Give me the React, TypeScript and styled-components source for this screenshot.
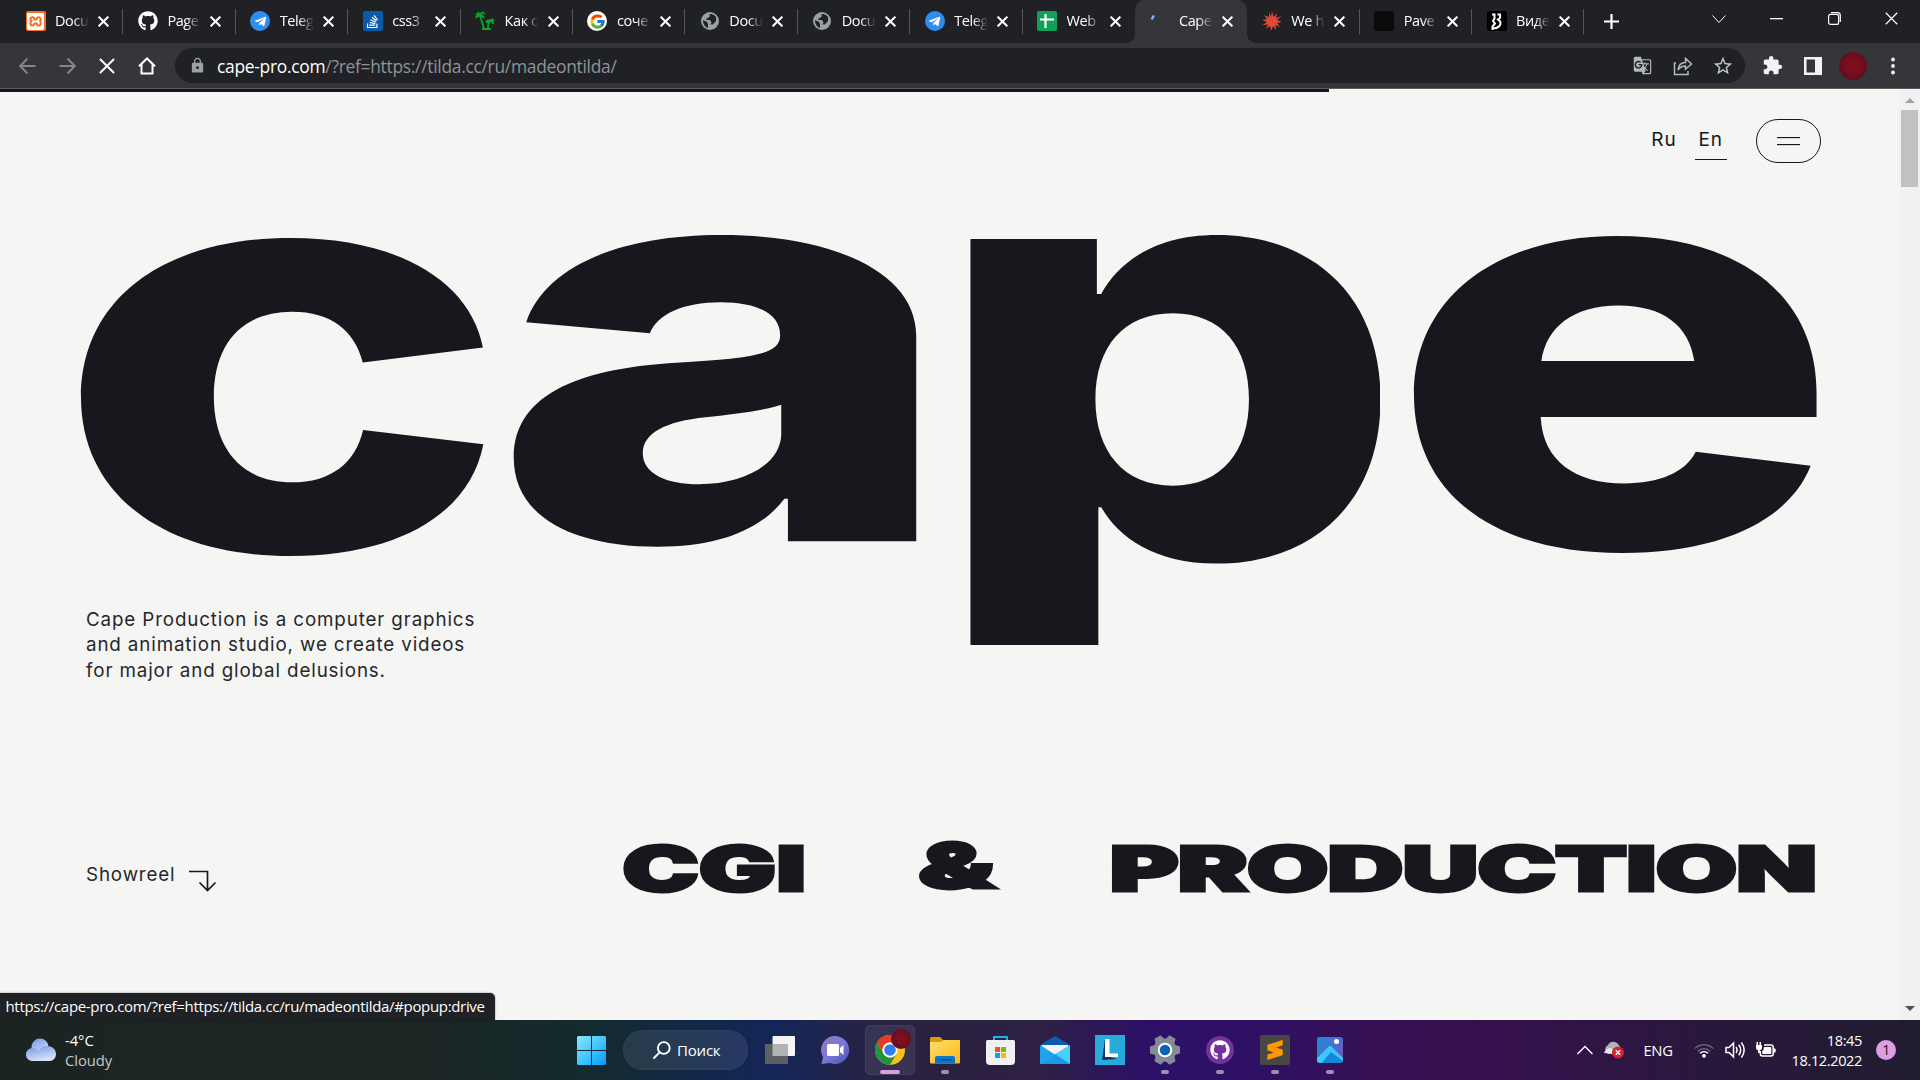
import React, { useLayoutEffect, useState } from "react";
import styled, { createGlobalStyle, css } from "styled-components";
import { FaGithub, FaTelegramPlane, FaStackOverflow } from "react-icons/fa";
import { FcGoogle } from "react-icons/fc";
import { SiSublimetext, SiXampp } from "react-icons/si";
import { MdExtension, MdLock, MdStarOutline, MdGTranslate } from "react-icons/md";

const ink = "#17181d";
const paper = "#f5f5f3";
const ui = '"Open Sans", "Noto Sans", sans-serif';

const GlobalStyle = createGlobalStyle`
  * { box-sizing: border-box; }
  body { margin: 0; background: ${paper}; overflow: hidden; }
  svg { display: block; flex: none; }
`;

const Screen = styled.div`
  width: 1920px;
  height: 1080px;
  display: flex;
  flex-direction: column;
  overflow: hidden;
  font-family: ${ui};
`;

/* ---------- Browser tabs ---------- */

const TabStrip = styled.div`
  height: 43px;
  flex: none;
  display: flex;
  padding-left: 11px;
  background: #202124;
  color: #fff;
`;

const Tab = styled.div<{ $active?: boolean; $line?: boolean }>`
  position: relative;
  width: 112.4px;
  height: 43px;
  flex: none;
  display: flex;
  align-items: center;
  padding: 0 0 1px 14.5px;
  ${(p) =>
    p.$active &&
    css`
      background: #35363a;
      border-radius: 10px 10px 0 0;
      &::before,
      &::after {
        content: "";
        position: absolute;
        bottom: 0;
        width: 10px;
        height: 10px;
      }
      &::before {
        left: -10px;
        background: radial-gradient(circle at 0 0, transparent 10px, #35363a 10.5px);
      }
      &::after {
        right: -10px;
        background: radial-gradient(circle at 100% 0, transparent 10px, #35363a 10.5px);
      }
    `}
  ${(p) =>
    p.$line &&
    css`
      &::after {
        content: "";
        position: absolute;
        right: 0;
        top: 9px;
        width: 1px;
        height: 25px;
        background: #55575c;
      }
    `}
`;

const Favicon = styled.div<{ $bg?: string; $round?: boolean }>`
  width: 20px;
  height: 20px;
  flex: none;
  display: flex;
  align-items: center;
  justify-content: center;
  background: ${(p) => p.$bg || "transparent"};
  border-radius: ${(p) => (p.$round ? "50%" : "2px")};
  overflow: hidden;
`;

const TabTitle = styled.span`
  width: 34px;
  margin-left: 9.5px;
  white-space: nowrap;
  font-size: 14.5px;
  line-height: 20px;
  letter-spacing: -0.4px;
  mask-image: linear-gradient(90deg, #000 55%, transparent 100%);
`;

const TabClose = styled.div`
  margin-left: 9px;
`;

const NewTab = styled.div`
  display: flex;
  align-items: center;
  padding: 0 0 1px 20px;
`;

const WindowControls = styled.div`
  margin-left: auto;
  height: 37px;
  display: flex;
  align-items: center;
`;

const WindowButton = styled.div`
  width: 57.3px;
  display: flex;
  justify-content: center;
`;

/* ---------- Toolbar ---------- */

const Toolbar = styled.div`
  height: 46px;
  flex: none;
  display: flex;
  align-items: flex-start;
  padding: 5px 0 0 7px;
  background: #35363a;
  border-bottom: 1px solid #5b5c60;
`;

const ToolButton = styled.div`
  width: 40px;
  height: 35px;
  flex: none;
  display: flex;
  align-items: center;
  justify-content: center;
`;

const Omnibox = styled.div`
  width: 1570px;
  height: 35px;
  margin-left: 8px;
  display: flex;
  align-items: center;
  padding: 0 2.5px 0 14px;
  border-radius: 18px;
  background: #202124;
  color: #9aa0a6;
`;

const Url = styled.div`
  margin-left: 11px;
  font-size: 17.4px;
  line-height: 24px;
  letter-spacing: -0.28px;
  white-space: nowrap;
  color: #8f9399;
  b {
    font-weight: 400;
    color: #fff;
  }
`;

const OmniActions = styled.div`
  margin-left: auto;
  display: flex;
`;

const Avatar = styled.div`
  width: 28px;
  height: 28px;
  border-radius: 50%;
  background: radial-gradient(circle, #7d0f20 30%, #4c0c18 100%);
`;

const ToolbarEnd = styled.div`
  display: flex;
  margin-left: 7.5px;
`;

/* ---------- Page ---------- */

const Viewport = styled.div`
  position: relative;
  height: 931px;
  flex: none;
  display: flex;
  background: ${paper};
  color: ${ink};
`;

const Page = styled.main`
  width: 1899px;
  display: flex;
  flex-direction: column;
  font-family: Inter, sans-serif;
`;

const Progress = styled.div`
  width: 1329px;
  height: 3px;
  flex: none;
  background: #19141d;
`;

const Header = styled.header`
  display: flex;
  justify-content: flex-end;
  height: 140px;
  padding: 27px 78px 0 0;
`;

const Lang = styled.a<{ $current?: boolean }>`
  height: 41px;
  padding: 8px 4px 0;
  margin-left: 14px;
  font-size: 19px;
  line-height: 26px;
  letter-spacing: 0.9px;
  border-bottom: 1px solid ${(p) => (p.$current ? ink : "transparent")};
`;

const MenuButton = styled.button`
  width: 65px;
  height: 44px;
  margin-left: 29px;
  padding: 0;
  display: flex;
  flex-direction: column;
  align-items: center;
  justify-content: center;
  gap: 6px;
  background: none;
  border: 1.5px solid ${ink};
  border-radius: 22px;
`;

const MenuLine = styled.span`
  width: 23px;
  height: 1px;
  background: ${ink};
  box-shadow: 0 0.5px 0 rgba(23, 24, 29, 0.3);
`;

const Wordmark = styled.h1`
  height: 411px;
  flex: none;
  margin: 3px 0 0;
  padding-left: 81px;
  display: flex;
  align-items: flex-start;
`;

const FitBox = styled.span<{ $w: number; $h: number; $left: number; $top: number; $clip?: number }>`
  display: block;
  flex: none;
  width: ${(p) => p.$w}px;
  height: ${(p) => p.$h}px;
  margin: ${(p) => p.$top}px 0 0 ${(p) => p.$left}px;
  ${(p) => p.$clip && css`clip-path: inset(0 0 ${p.$clip}px 0);`}
`;

const FitInk = styled.span<{ $size: number; $stroke: number; $weight: number }>`
  display: block;
  width: max-content;
  font: ${(p) => p.$weight} ${(p) => p.$size}px/1 Inter, sans-serif;
  font-kerning: none;
  color: ${ink};
  transform-origin: 0 0;
  white-space: pre;
  -webkit-text-stroke: ${(p) => p.$stroke}px ${ink};
`;

type FitProps = {
  children: string;
  w: number;
  h: number;
  left?: number;
  top?: number;
  size: number;
  stroke?: number;
  spacing?: number;
  weight?: number;
  clip?: number;
};

/* Draws the text off screen and returns the rectangle its pixels cover, baseline at 0. */
function inkBounds(text: string, size: number, weight: number, spacing: number) {
  const canvas = document.createElement("canvas");
  canvas.width = Math.ceil(size * (text.length + 1));
  canvas.height = size * 2;
  const ctx = canvas.getContext("2d", { willReadFrequently: true })!;
  ctx.font = `${weight} ${size}px Inter, sans-serif`;
  ctx.fontKerning = "none";
  (ctx as any).letterSpacing = `${spacing}px`;
  const ox = Math.round(size / 4);
  const oy = Math.round(size * 1.3);
  ctx.fillText(text, ox, oy);
  const { data, width, height } = ctx.getImageData(0, 0, canvas.width, canvas.height);
  let x0 = width, x1 = 0, y0 = height, y1 = 0;
  for (let y = 0; y < height; y++)
    for (let x = 0; x < width; x++)
      if (data[(y * width + x) * 4 + 3] > 100) {
        if (x < x0) x0 = x;
        if (x > x1) x1 = x;
        if (y < y0) y0 = y;
        if (y > y1) y1 = y;
      }
  const m = ctx.measureText(text);
  const base = (size - m.fontBoundingBoxAscent - m.fontBoundingBoxDescent) / 2 + m.fontBoundingBoxAscent;
  return { left: x0 - ox, top: y0 - oy + base, width: x1 - x0 + 1, height: y1 - y0 + 1 };
}

/* Stretches a piece of display type so that its ink fills a box of w by h. */
function FitType({ children, w, h, left = 0, top = 0, size, stroke = 0, spacing = 0, weight = 900, clip }: FitProps) {
  const [transform, setTransform] = useState("none");
  useLayoutEffect(() => {
    const b = inkBounds(children, size, weight, spacing);
    const s = stroke / 2;
    const sx = w / (b.width + stroke);
    const sy = h / (b.height + stroke);
    setTransform(`matrix(${sx}, 0, 0, ${sy}, ${(s - b.left) * sx}, ${(s - b.top) * sy})`);
  }, [children, w, h, size, stroke, spacing, weight]);
  return (
    <FitBox $w={w} $h={h} $left={left} $top={top} $clip={clip}>
      <FitInk $size={size} $stroke={stroke} $weight={weight} style={{ transform, letterSpacing: spacing }}>
        {children}
      </FitInk>
    </FitBox>
  );
}

const Intro = styled.p`
  margin: -39px 0 0 86px;
  height: 76px;
  flex: none;
  width: 420px;
  font-size: 18.8px;
  line-height: 25.4px;
  letter-spacing: 0.86px;
  white-space: nowrap;
  color: #26272c;
`;

const Bottom = styled.div`
  display: flex;
  align-items: flex-start;
  margin-top: 158px;
  padding-left: 86px;
`;

const Showreel = styled.a`
  width: 537px;
  flex: none;
  display: flex;
  gap: 14px;
  padding-top: 21px;
  font-size: 18.8px;
  line-height: 26px;
  letter-spacing: 0.85px;
  color: #26272c;
  svg {
    margin-top: 8px;
  }
`;

const Tagline = styled.h2`
  display: flex;
  margin: 0;
`;

const Scrollbar = styled.div`
  width: 21px;
  display: flex;
  flex-direction: column;
  align-items: center;
  background: #f1f1f1;
  padding: 9px 0 9px;
`;

const Thumb = styled.div`
  width: 17px;
  height: 77px;
  margin-top: 7px;
  background: #c1c1c1;
`;

const ScrollArrow = styled.div<{ $down?: boolean }>`
  width: 0;
  height: 0;
  border: 5px solid transparent;
  border-top-width: ${(p) => (p.$down ? 5 : 0)}px;
  border-bottom-width: ${(p) => (p.$down ? 0 : 5)}px;
  border-top-color: #505050;
  border-bottom-color: #a3a3a3;
  margin-top: ${(p) => (p.$down ? "auto" : 0)};
`;

const StatusBubble = styled.div`
  position: absolute;
  left: 0;
  bottom: 0;
  width: 495px;
  height: 27px;
  padding-left: 5.5px;
  font-size: 15px;
  line-height: 26px;
  letter-spacing: -0.33px;
  white-space: nowrap;
  color: #fff;
  background: #202124;
  border-radius: 0 5px 0 0;
  box-shadow: 0 0 2px rgba(0, 0, 0, 0.5);
`;

/* ---------- Taskbar ---------- */

const Taskbar = styled.footer`
  height: 60px;
  flex: none;
  display: flex;
  align-items: center;
  color: #fff;
  background: linear-gradient(
    90deg,
    #1c2423 0,
    #1b2625 440px,
    #132a2e 590px,
    #12284a 700px,
    #142658 775px,
    #232347 850px,
    #2c2040 930px,
    #2d2044 1040px,
    #2c1067 1150px,
    #2f1067 1240px,
    #351053 1370px,
    #34124b 1530px,
    #29183d 1700px,
    #211c30 1920px
  );
`;

const Weather = styled.div`
  width: 577px;
  display: flex;
  align-items: center;
  padding-left: 26px;
  gap: 9px;
  font-size: 14.8px;
  line-height: 20px;
  letter-spacing: -0.05px;
  span {
    color: #c5c9c9;
  }
`;

const SearchPill = styled.div`
  width: 125px;
  height: 40px;
  margin: 0 7px 0 17px;
  padding-left: 29px;
  display: flex;
  align-items: center;
  gap: 6px;
  border-radius: 20px;
  background: rgba(255, 255, 255, 0.085);
  border: 1px solid rgba(255, 255, 255, 0.04);
  font-size: 15px;
  letter-spacing: -0.2px;
`;

const TaskApp = styled.div<{ $active?: boolean; $dot?: boolean }>`
  position: relative;
  width: 50px;
  height: 50px;
  margin-right: 5px;
  flex: none;
  display: flex;
  align-items: center;
  justify-content: center;
  border-radius: 5px;
  ${(p) =>
    p.$active &&
    css`
      background: rgba(255, 255, 255, 0.08);
      box-shadow: inset 0 0 0 1px rgba(255, 255, 255, 0.06);
    `}
  ${(p) =>
    (p.$dot || p.$active) &&
    css`
      &::after {
        content: "";
        position: absolute;
        bottom: 1px;
        left: ${p.$active ? 15 : 21}px;
        width: ${p.$active ? 20 : 8}px;
        height: 4px;
        border-radius: 2px;
        background: ${p.$active ? "#dd9fe3" : "#9d90b4"};
      }
    `}
`;

const AvatarBadge = styled.span`
  position: absolute;
  right: 4px;
  top: 4px;
  width: 20px;
  height: 20px;
  border-radius: 50%;
  background: radial-gradient(circle, #7d0f20 30%, #4c0c18 100%);
`;

const Tray = styled.div`
  margin-left: auto;
  display: flex;
  align-items: center;
  padding-right: 24px;
  font-size: 14.8px;
  letter-spacing: -0.3px;
`;

const TrayItem = styled.div<{ $w: number }>`
  width: ${(p) => p.$w}px;
  display: flex;
  justify-content: center;
`;

const Clock = styled.div`
  width: 82px;
  line-height: 20px;
  text-align: right;
  font-size: 14.6px;
  letter-spacing: -0.4px;
  white-space: nowrap;
`;

const Count = styled.div`
  width: 20px;
  height: 20px;
  margin-left: 14px;
  border-radius: 50%;
  background: #dd9fe3;
  color: #1c1420;
  font-size: 14px;
  line-height: 20px;
  text-align: center;
`;

/* ---------- Icons ---------- */

const Cross = ({ s = 10, w = 2, c = "#fff" }: { s?: number; w?: number; c?: string }) => (
  <svg width={s} height={s} viewBox="0 0 10 10" stroke={c} strokeWidth={(w * 10) / s}>
    <path d="M.6.6l8.800 8.800M9.400.6L.6 9.400" />
  </svg>
);

const Telegram = () => (
  <Favicon $bg="#2f8eed" $round>
    <FaTelegramPlane size={13} color="#fff" />
  </Favicon>
);

const Globe = () => (
  <Favicon>
    <svg width="18" height="18" viewBox="0 0 18 18">
      <circle cx="9" cy="9" r="9" fill="#9aa0a6" />
      <path d="M10 2c-2 0-2 1.500-1 2l-2 2H5.500v2H9l1.500 2.500-1 2H12l3-3.500V5l-2-2z M2 8l4 2 1 2v4C4 15 2 12 2 8z" fill="#202124" />
    </svg>
  </Favicon>
);

const Palms = () => (
  <Favicon>
    <svg width="20" height="20" viewBox="0 0 20 20" fill="none" stroke="#0aa32b" strokeWidth="1.800">
      <path d="M5 4c1 4 2 8 4 13M15 10c-2 2-2 4-2 7M1 4c2-2 3-1 4 0 1-3 3-3 5-1M1 7c1-2 3-3 4-3 2 0 3 1 4 3M5 4L3 1M11 11c1-2 3-2 4-1 1-2 3-2 4 0M15 10c2 0 3 1 3 3M15 10c-2 0-3 1-3 2" />
      <path d="M7 18h9" />
    </svg>
  </Favicon>
);

const Burst = () => (
  <Favicon>
    <svg width="20" height="20" viewBox="-10 -10 20 20" fill="#de4a35">
      <path d="M0-10L1.500-4 5-8 4-3 9.500-5 5-1 10 1 5 2 8 6 3.500 4 4 9 1 5-1 10-2 5-6 8-4 3.500-9.500 4-5 1-10-1-5-2-8-6-3-4-3-9-1-4z" />
    </svg>
  </Favicon>
);

const Sheet = () => (
  <Favicon $bg="#11a05a">
    <svg width="20" height="20" viewBox="0 0 20 20" stroke="#fff" strokeWidth="2.200">
      <path d="M8.500 3v14M3 8.500h14" />
    </svg>
  </Favicon>
);

const Squiggle = () => (
  <Favicon $bg="#000">
    <svg width="20" height="20" viewBox="0 0 20 20" fill="none" stroke="#fff" strokeWidth="2">
      <path d="M5 3.500h2.500v4L6 10l2 2.500-2.500 3V19M6 17.500c5 0 8-3 7.500-6C13 9.500 11.500 9 11 8.500c2.500-1 2.500-3 2-5h-2.500" />
    </svg>
  </Favicon>
);

const Spinner = () => (
  <Favicon>
    <svg width="20" height="20" viewBox="0 0 20 20" fill="none" stroke="#8ab4f8" strokeWidth="2.400">
      <path d="M5 4.500Q3.500 6 3 8.500" />
    </svg>
  </Favicon>
);

const tabs: { title: string; icon: React.ReactNode; active?: boolean; line?: boolean }[] = [
  { title: "Docu", icon: <Favicon $bg="#f07220"><SiXampp size={17} color="#fff" /></Favicon>, line: true },
  { title: "Page", icon: <Favicon><FaGithub size={20} color="#fff" /></Favicon>, line: true },
  { title: "Teleg", icon: <Telegram />, line: true },
  { title: "css3", icon: <Favicon $bg="#0a5ba5"><FaStackOverflow size={15} color="#fff" /></Favicon>, line: true },
  { title: "Как с", icon: <Palms />, line: true },
  { title: "соче", icon: <Favicon $bg="#fff" $round><FcGoogle size={17} /></Favicon>, line: true },
  { title: "Docu", icon: <Globe />, line: true },
  { title: "Docu", icon: <Globe />, line: true },
  { title: "Teleg", icon: <Telegram />, line: true },
  { title: "Web", icon: <Sheet /> },
  { title: "Cape", icon: <Spinner />, active: true },
  { title: "We h", icon: <Burst />, line: true },
  { title: "Pave", icon: <Favicon $bg="#0b0b0b" />, line: true },
  { title: "Виде", icon: <Squiggle />, line: true },
];

const Arrow = ({ flip }: { flip?: boolean }) => (
  <svg width="17" height="18" viewBox="0 0 17 18" fill="none" stroke="#84868a" strokeWidth="1.900" transform={flip ? "scale(-1 1)" : undefined}>
    <path d="M16.500 9H1.500M8.500 1.500L1.200 9l7.300 7.500" />
  </svg>
);

const Home = () => (
  <svg width="18" height="18" viewBox="0 0 18 18" fill="none" stroke="#fff" strokeWidth="2">
    <path d="M1 9.200L9 1.500l8 7.700M3.500 7.500V16.500h11V7.500" />
  </svg>
);

const Share = () => (
  <svg width="20" height="20" viewBox="0 0 20 20" fill="none" stroke="#b4b7bb" strokeWidth="1.500">
    <path d="M3 7H1.500v11.500H15V15M5 14c.5-5 3-7.500 7.500-7.500V2.500L18.500 8 12.500 13.200V10C9 10 7 11 5 14z" />
  </svg>
);

const SidePanel = () => (
  <svg width="18" height="18" viewBox="0 0 18 18">
    <path d="M0 0h18v18H0zM2.500 2.500v13H11v-13z" fill="#f1f3f4" fillRule="evenodd" />
  </svg>
);

const Dots = () => (
  <svg width="4" height="18" viewBox="0 0 4 18" fill="#f1f3f4">
    <circle cx="2" cy="2.500" r="1.900" />
    <circle cx="2" cy="9" r="1.900" />
    <circle cx="2" cy="15.500" r="1.900" />
  </svg>
);

const ShowArrow = () => (
  <svg width="28" height="22" viewBox="0 0 28 22" fill="none" stroke={ink} strokeWidth="1.700">
    <path d="M0 1.500h18.500V20M10.500 12.500l8 8 8-8" />
  </svg>
);

const WeatherCloud = () => (
  <svg width="30" height="24" viewBox="0 0 30 24">
    <defs>
      <linearGradient id="wc" x1="0" y1="0" x2=".4" y2="1">
        <stop offset="0" stopColor="#7394e0" />
        <stop offset="1" stopColor="#d3e2fb" />
      </linearGradient>
    </defs>
    <circle cx="14" cy="9" r="8.500" fill="url(#wc)" />
    <path d="M7 10c3 0 5 1.500 6 3 1-3 4-5 8-5 5 0 9 3 9 8 0 4-3 7-6 7H7c-4 0-7-2.500-7-6.500S3 10 7 10z" fill="url(#wc)" />
  </svg>
);

const Windows = () => (
  <svg width="29" height="29" viewBox="0 0 29 29">
    <defs>
      <linearGradient id="win" x1="0" y1="0" x2="29" y2="29" gradientUnits="userSpaceOnUse">
        <stop offset="0" stopColor="#8be3ff" />
        <stop offset=".5" stopColor="#44c8fd" />
        <stop offset="1" stopColor="#0796fb" />
      </linearGradient>
    </defs>
    <path d="M1 0h13v14H0V1zM15 0h13l1 1v13H15zM0 15h14v14H1l-1-1zM15 15h14v13l-1 1H15z" fill="url(#win)" />
  </svg>
);

const Magnifier = () => (
  <svg width="18" height="18" viewBox="0 0 18 18" fill="none" stroke="#fff" strokeWidth="1.900">
    <circle cx="10.800" cy="7" r="5.900" />
    <path d="M6.600 11.300L1 17" strokeLinecap="round" />
  </svg>
);

const TaskView = () => (
  <svg width="30" height="28" viewBox="0 0 30 28">
    <rect x="7.500" width="22.500" height="20" rx="1" fill="#f4f4f5" />
    <rect y="8" width="23" height="20" rx="1" fill="#5e5f63" />
    <path d="M7.500 8H23v12H7.500z" fill="#b1b2b4" />
  </svg>
);

const Chat = () => (
  <svg width="29" height="29" viewBox="0 0 29 29">
    <defs>
      <linearGradient id="chat" x1="0" y1="0" x2="1" y2="1">
        <stop offset="0" stopColor="#9a73b8" />
        <stop offset=".5" stopColor="#7a78d8" />
        <stop offset="1" stopColor="#4b4fb8" />
      </linearGradient>
    </defs>
    <path d="M14.500 0A14 14 0 1 1 9 27L.5 28 2 21A14 14 0 0 1 14.500 0z" fill="url(#chat)" />
    <rect x="6" y="8" width="12" height="12" rx="1.500" fill="#fff" />
    <path d="M19 12l3.500-3v10L19 16z" fill="#fff" />
  </svg>
);

const Chrome = () => (
  <svg width="30" height="30" viewBox="-15 -15 30 30">
    <circle r="15" fill="#fbc116" />
    <path d="M-13-7.500A15 15 0 0 1 13-7.500H0A7.500 7.500 0 0 0-6.500 3.750z" fill="#e33b2e" />
    <path d="M-13-7.500A15 15 0 0 0 0 15L6.500 3.750A7.500 7.500 0 0 1-6.500 3.750z" fill="#229342" />
    <circle r="7.500" fill="#fff" />
    <circle r="5.800" fill="#2f7cf0" />
  </svg>
);

const Folder = () => (
  <svg width="30" height="27" viewBox="0 0 30 27">
    <defs>
      <linearGradient id="fold" x1="0" y1="0" x2="1" y2="1">
        <stop offset="0" stopColor="#ffdf6d" />
        <stop offset="1" stopColor="#fbb817" />
      </linearGradient>
    </defs>
    <path d="M0 1.500Q0 0 1.500 0H10l3 3v5H0z" fill="#dd9a0a" />
    <path d="M0 5h11l2.500-2H30v22.500q0 1-1 1H1q-1 0-1-1z" fill="url(#fold)" />
    <path d="M5 26.500V21q0-2 2-2h16q2 0 2 2v5.500z" fill="#0b77c8" />
    <path d="M8.500 22.800h13" stroke="#064f91" strokeWidth="1.400" />
  </svg>
);

const Store = () => (
  <svg width="29" height="29" viewBox="0 0 29 29">
    <path d="M8 7V1h13v6" fill="none" stroke="#1fb4ea" strokeWidth="2" />
    <path d="M0 5.500Q0 4 1.500 4h26Q29 4 29 5.500V25q0 4-4 4H4q-4 0-4-4z" fill="#f1f1f3" />
    <path d="M9 11h5v5H9z" fill="#f25022" />
    <path d="M15 11h5v5h-5z" fill="#7fba00" />
    <path d="M9 17h5v5H9z" fill="#00a4ef" />
    <path d="M15 17h5v5h-5z" fill="#ffb900" />
  </svg>
);

const Mail = () => (
  <svg width="30" height="28" viewBox="0 0 30 28">
    <path d="M0 9L14 .5q1-.6 2 0L30 9v6H0z" fill="#0c5cad" />
    <path d="M2 9h26v8L15 20 2 17z" fill="#f3f4f6" />
    <path d="M0 9l15 9.500L13 28H1q-1 0-1-1z" fill="#1fa3ea" />
    <path d="M30 9v18q0 1-1 1H1l14-10z" fill="#45d0fb" />
    <path d="M1 28l14-10 15 10z" fill="#1d97e6" />
  </svg>
);

const Lightshot = () => (
  <svg width="30" height="30" viewBox="0 0 30 30">
    <path d="M0 0h30v30H0z" fill="#27abdb" />
    <path d="M10 4L7 25l15-1-10-3z" fill="#16325c" />
    <path d="M10 4h4.500v14.500H23V22H10z" fill="#fff" />
  </svg>
);

const Gear = () => (
  <svg width="30" height="30" viewBox="-15 -15 30 30">
    <g fill="#838b93">
      <circle r="11.500" />
      {[0, 60, 120].map((a) => (
        <path key={a} transform={`rotate(${a + 90})`} d="M-5-10L-3.500-15h7L5-10v20l-1.500 5h-7L-5 10z" />
      ))}
    </g>
    <circle r="6.300" fill="#0d62b4" stroke="#fff" strokeWidth="2" />
  </svg>
);

const GithubDesktop = () => (
  <svg width="28" height="28" viewBox="0 0 28 28">
    <circle cx="14" cy="14" r="14" fill="#74309b" />
    <g transform="translate(4 4)">
      <FaGithub size={20} color="#fff" />
    </g>
  </svg>
);

const Sublime = () => (
  <svg width="30" height="30" viewBox="0 0 30 30">
    <rect width="30" height="30" rx="2" fill="#474747" />
    <g transform="translate(5 5)">
      <SiSublimetext size={20} color="#ff9800" />
    </g>
  </svg>
);

const Photos = () => (
  <svg width="26" height="26" viewBox="0 0 26 26">
    <defs>
      <linearGradient id="ph" x1="0" y1="0" x2="1" y2="1">
        <stop offset="0" stopColor="#1690dd" />
        <stop offset="1" stopColor="#7d4db5" />
      </linearGradient>
      <clipPath id="phc">
        <rect width="26" height="26" rx="3" />
      </clipPath>
    </defs>
    <g clipPath="url(#phc)">
      <path d="M0 0h26v26H0z" fill="url(#ph)" />
      <path d="M3 26L13 13l13 11v2z" fill="#1785d8" />
      <path d="M0 21L11 10q2-2 4 0l11 11v3L14 15 4.500 26H0z" fill="#3cc9f8" />
      <circle cx="19.500" cy="4.500" r="2.500" fill="#fff" />
    </g>
  </svg>
);

const apps: { icon: React.ReactNode; active?: boolean; dot?: boolean }[] = [
  { icon: <TaskView /> },
  { icon: <Chat /> },
  { icon: <><Chrome /><AvatarBadge /></>, active: true },
  { icon: <Folder />, dot: true },
  { icon: <Store /> },
  { icon: <Mail /> },
  { icon: <Lightshot /> },
  { icon: <Gear />, dot: true },
  { icon: <GithubDesktop />, dot: true },
  { icon: <Sublime />, dot: true },
  { icon: <Photos />, dot: true },
];

const Chevron = ({ up, thin }: { up?: boolean; thin?: boolean }) => (
  <svg width="16" height="10" viewBox="0 0 16 10" fill="none" stroke="#fff" strokeWidth={thin ? 1 : 1.4}>
    <path d={up ? "M.5 9L8 1.500 15.500 9" : "M1.500 1.500L8 8.500l6.500-7"} />
  </svg>
);

const CloudError = () => (
  <svg width="22" height="18" viewBox="0 0 22 18">
    <path d="M5 13a5 5 0 0 1 0-9 6 6 0 0 1 10-1l3 4-5 6z" fill="#b4b0bb" />
    <path d="M1 12q2-5 7-5l6 6z" fill="#e9e7ed" />
    <circle cx="15" cy="11.500" r="6" fill="#d6222c" />
    <path d="M12.800 9.300l4.400 4.400M17.200 9.300l-4.400 4.400" stroke="#fff" strokeWidth="1.500" />
  </svg>
);

const Wifi = () => (
  <svg width="20" height="16" viewBox="0 0 20 16" fill="none" strokeWidth="1.500">
    <path d="M.8 6.500a13 13 0 0 1 18.400 0" stroke="#6a5f78" />
    <path d="M3.600 9.400a9 9 0 0 1 12.800 0" stroke="#6a5f78" />
    <path d="M6 11.200a6 6 0 0 1 8 0" stroke="#fff" />
    <circle cx="10" cy="13.800" r="1.900" fill="#fff" />
  </svg>
);

const Volume = () => (
  <svg width="21" height="18" viewBox="0 0 21 18" fill="none" stroke="#fff" strokeWidth="1.500">
    <path d="M1 6.500h3L8.500 2v14L4 11.500H1zM11 6q2 3 0 6M13.700 3.700q4 5.300 0 10.600M16.400 1.500q5.500 7.500 0 15" />
  </svg>
);

const Battery = () => (
  <svg width="21" height="18" viewBox="0 0 21 18">
    <path d="M9 4h7q2.200 0 2.200 2.200v6.600Q18.200 15 16 15H7.500Q5.300 15 5.300 12.800V10" fill="none" stroke="#fff" strokeWidth="1.500" />
    <path d="M9 6h6.500q.8 0 .8.800v5.400q0 .8-.8.800H8q-.8 0-.8-.8V10Q9 9 9 6zM18.500 7.500H20q.8 0 .8 2t-.8 2h-1.500zM1.500 1H3v3h1.500V1H6v3h1v3Q7 9 4.800 9.200V12H3V9.200Q1 9 1 7V4h.5z" fill="#fff" />
  </svg>
);

export default function App() {
  return (
    <Screen>
      <GlobalStyle />
      <TabStrip>
        {tabs.map((t, i) => (
          <Tab key={i} $active={t.active} $line={t.line}>
            {t.icon}
            <TabTitle>{t.title}</TabTitle>
            <TabClose>
              <Cross s={11} w={2} />
            </TabClose>
          </Tab>
        ))}
        <NewTab>
          <svg width="15" height="15" viewBox="0 0 15 15" stroke="#fff" strokeWidth="2.200">
            <path d="M7.500 0v15M0 7.500h15" />
          </svg>
        </NewTab>
        <WindowControls>
          <WindowButton><Chevron thin /></WindowButton>
          <WindowButton>
            <svg width="13" height="2" viewBox="0 0 13 2"><path d="M0 0h13v1.300H0z" fill="#fff" /></svg>
          </WindowButton>
          <WindowButton>
            <svg width="13" height="13" viewBox="0 0 13 13" fill="none" stroke="#fff" strokeWidth="1.200">
              <rect x=".6" y="2.400" width="10" height="10" rx="2" />
              <path d="M3 .7h6.500q2.800 0 2.800 2.800V10" />
            </svg>
          </WindowButton>
          <WindowButton><Cross s={13} w={1.2} /></WindowButton>
        </WindowControls>
      </TabStrip>

      <Toolbar>
        <ToolButton><Arrow /></ToolButton>
        <ToolButton><Arrow flip /></ToolButton>
        <ToolButton><Cross s={16} w={2} /></ToolButton>
        <ToolButton><Home /></ToolButton>
        <Omnibox>
          <MdLock size={17} color="#9aa0a6" />
          <Url><b>cape-pro.com</b>/?ref=https://tilda.cc/ru/madeontilda/</Url>
          <OmniActions>
            <ToolButton><MdGTranslate size={19} color="#b4b7bb" /></ToolButton>
            <ToolButton><Share /></ToolButton>
            <ToolButton><MdStarOutline size={22} color="#c4c7ca" /></ToolButton>
          </OmniActions>
        </Omnibox>
        <ToolbarEnd>
          <ToolButton><MdExtension size={21} color="#f1f3f4" /></ToolButton>
          <ToolButton><SidePanel /></ToolButton>
          <ToolButton><Avatar /></ToolButton>
          <ToolButton><Dots /></ToolButton>
        </ToolbarEnd>
      </Toolbar>

      <Viewport>
        <Page>
          <Progress />
          <Header>
            <Lang>Ru</Lang>
            <Lang $current>En</Lang>
            <MenuButton aria-label="Menu">
              <MenuLine />
              <MenuLine />
            </MenuButton>
          </Header>
          <Wordmark>
            <FitType w={402} h={319} top={3} size={540} weight={800}>c</FitType>
            <FitType w={402} h={312} left={31} size={540} weight={800}>a</FitType>
            <FitType w={410} h={444} left={54} size={540} weight={800} clip={34}>p</FitType>
            <FitType w={402} h={318} left={34} top={1} size={540} weight={800}>e</FitType>
          </Wordmark>
          <Intro>
            Cape Production is a computer graphics
            <br />
            and animation studio, we create videos
            <br />
            for major and global delusions.
          </Intro>
          <Bottom>
            <Showreel>
              Showreel
              <ShowArrow />
            </Showreel>
            <Tagline>
              <FitType w={181} h={50} top={3} size={64} stroke={3} spacing={0}>CGI</FitType>
              <FitType w={79} h={50} left={115} size={64} stroke={3}>&amp;</FitType>
              <FitType w={703} h={50} left={114} top={3} size={64} stroke={3} spacing={-0.8}>PRODUCTION</FitType>
            </Tagline>
          </Bottom>
        </Page>
        <Scrollbar>
          <ScrollArrow />
          <Thumb />
          <ScrollArrow $down />
        </Scrollbar>
        <StatusBubble>https://cape-pro.com/?ref=https://tilda.cc/ru/madeontilda/#popup:drive</StatusBubble>
      </Viewport>

      <Taskbar>
        <Weather>
          <WeatherCloud />
          <div>
            -4°C
            <br />
            <span>Cloudy</span>
          </div>
        </Weather>
        <Windows />
        <SearchPill>
          <Magnifier />
          Поиск
        </SearchPill>
        {apps.map((a, i) => (
          <TaskApp key={i} $active={a.active} $dot={a.dot}>
            {a.icon}
          </TaskApp>
        ))}
        <Tray>
          <TrayItem $w={30}><Chevron up /></TrayItem>
          <TrayItem $w={28}><CloudError /></TrayItem>
          <TrayItem $w={60}>ENG</TrayItem>
          <TrayItem $w={32}><Wifi /></TrayItem>
          <TrayItem $w={30}><Volume /></TrayItem>
          <TrayItem $w={30}><Battery /></TrayItem>
          <Clock>
            18:45
            <br />
            18.12.2022
          </Clock>
          <Count>1</Count>
        </Tray>
      </Taskbar>
    </Screen>
  );
}
